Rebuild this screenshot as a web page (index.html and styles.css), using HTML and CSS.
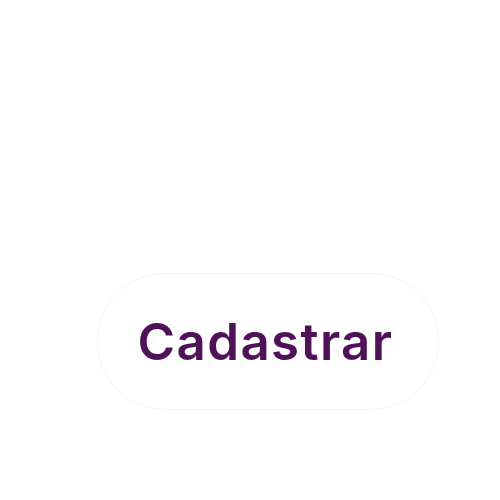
FILE: index.html
```html
<!DOCTYPE html>
<html lang="pt">
<head>
<meta charset="utf-8">
<link rel="stylesheet" href="styles.css">
</head>
<body>
<main class="stage">
  <button class="pill-button" type="button">Cadastrar</button>
</main>
</body>
</html>
```
FILE: styles.css
```css
html, body {
  margin: 0;
  padding: 0;
  background: #ffffff;
}
.stage {
  width: 500px;
  height: 500px;
  box-sizing: border-box;
  padding: 273px 0 0 97px;
}
.pill-button {
  width: 342px;
  height: 137px;
  box-sizing: border-box;
  border: 1px solid #f6f6f6;
  border-radius: 68px;
  background: #ffffff;
  font-family: "Inter", "Liberation Sans", sans-serif;
  font-weight: 600;
  font-size: 51px;
  color: #4f1158;
  padding: 0 5px 1px 0;
  letter-spacing: 1.4px;
  cursor: pointer;
}
```
